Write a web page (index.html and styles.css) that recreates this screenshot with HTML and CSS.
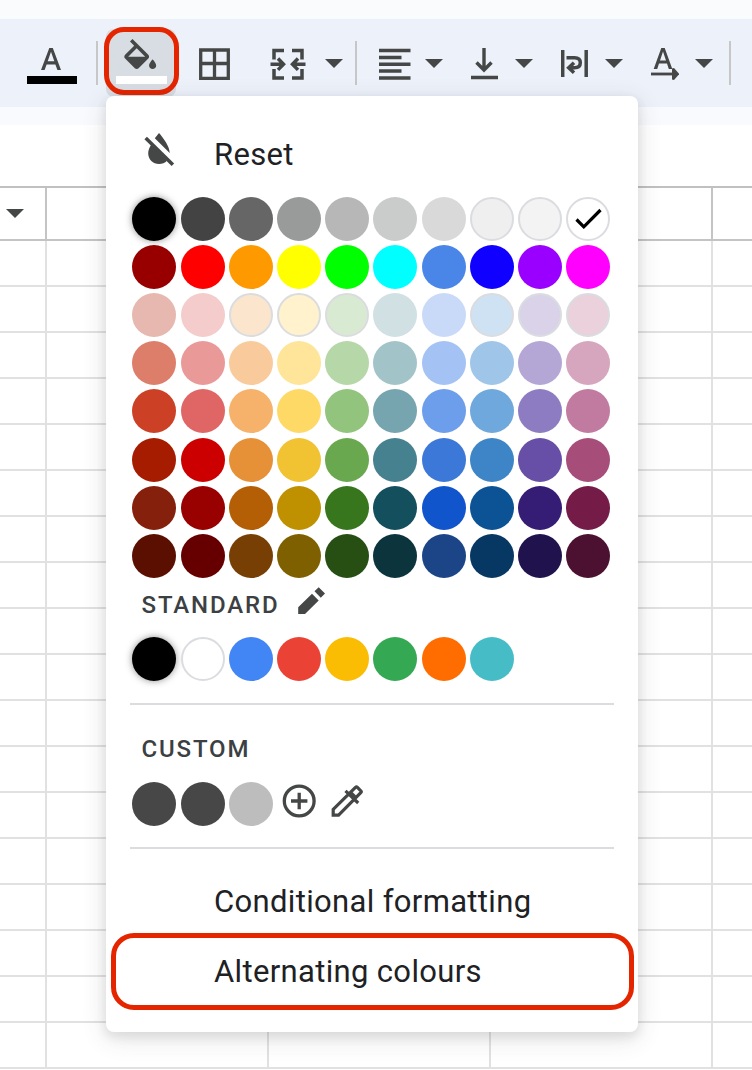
FILE: index.html
```html
<!DOCTYPE html>
<html lang="en-GB">
<head>
<meta charset="utf-8">
<title>Fill colour</title>
<link rel="stylesheet" href="styles.css">
</head>
<body>
<div class="app">
  <div class="title-strip"></div>
  <div class="toolbar">
    <div class="text-colour"><svg width="50" height="88" viewBox="27 19 50 88"><path class="ink" d="M49.3 48h3.500L61 70h-3.600l-2-5.600h-8.800L44.600 70H41zM47.700 61.300h6.600L51 51.800z"/><path d="M27 76h50v8H27z"/></svg></div>
    <div class="separator s1"></div>
    <div class="fill-button">
      <div class="pressed"></div>
      <svg width="77" height="88" viewBox="103 19 77 88"><path fill="#fff" d="M116 76h51v8h-51z"/><path class="ink" transform="translate(119 39) scale(1.77)" d="M16.56 8.940L7.620 0 6.210 1.410l2.380 2.380-5.150 5.150c-.59.59-.59 1.540 0 2.120l5.500 5.500c.29.29.68.44 1.060.44s.77-.15 1.060-.44l5.500-5.500c.59-.58.59-1.530 0-2.120zM5.210 10L10 5.210 14.790 10H5.210zM19 11.500s-2 2.170-2 3.500c0 1.100.9 2 2 2s2-.9 2-2c0-1.330-2-3.500-2-3.500z"/></svg>
      <div class="mark mark-button"></div>
    </div>
    <svg class="borders" width="31" height="88" viewBox="199 19 31 88"><path class="line" stroke-width="3.300" d="M200.700 50h27.600v28.300h-27.600zM214.500 50v28M200.700 63.500h27.600"/></svg>
    <svg class="merge" width="36" height="88" viewBox="270 19 36 88"><path class="line" stroke-width="3.500" d="M284 50.500h-10v9M284 78h-10v-9M292 50.500h10v9M292 78h10v-9M270.500 64.200h13M305.500 64.200h-13M278 58.500l5.500 5.700-5.500 5.700M298 58.500l-5.500 5.700 5.500 5.700"/></svg>
    <svg class="caret c1" width="18" height="9"><path class="ink" d="M0 0h18L9 9z"/></svg>
    <div class="separator s2"></div>
    <svg class="align" width="32" height="88" viewBox="379 19 32 88"><path class="line" stroke-width="3.500" d="M379 50.500h31.500M379 57.400h22.500M379 64.200h31.500M379 71h22.500M379 78h31.500"/></svg>
    <svg class="caret c2" width="18" height="9"><path class="ink" d="M0 0h18L9 9z"/></svg>
    <svg class="valign" width="27" height="88" viewBox="471 19 27 88"><path class="line" stroke-width="3.400" d="M471 77.500h27M484 48v22M476.500 62.500l7.500 7.500 7.500-7.500"/></svg>
    <svg class="caret c3" width="18" height="9"><path class="ink" d="M0 0h18L9 9z"/></svg>
    <svg class="wrap" width="27" height="88" viewBox="561 19 27 88"><path class="line" stroke-width="3.500" d="M562.700 50v27M586.200 50v27M566.500 57.800h8c3.800 0 5.800 2 5.800 5s-2 5-5.800 5h-5M574 62.700l-5.300 5.100 5.300 5"/></svg>
    <svg class="caret c4" width="18" height="9"><path class="ink" d="M0 0h18L9 9z"/></svg>
    <svg class="rotate" width="28" height="88" viewBox="651 19 28 88"><path class="ink" d="M661.300 48h3.400L672.300 69h-3.500l-1.800-5.400h-8L657.200 69h-3.500zM660 60.600h6l-3-9z"/><path class="line" stroke-width="2.800" d="M651 74h25"/><path class="ink" d="M672 68.500l2-.5 5.300 6-5.300 6-2-.5z"/></svg>
    <svg class="caret c5" width="18" height="9"><path class="ink" d="M0 0h18L9 9z"/></svg>
    <div class="separator s3"></div>
  </div>
  <div class="under-strip"></div>
  <div class="formula"></div>
  <div class="sheet" id="sheet"></div>

  <div class="menu">
    <div class="item reset">
      <svg width="32" height="36" viewBox="144 132 32 36"><path class="ink" d="M159 133l-4.200 5.300 14.900 14.600c0-6.400-6.100-14.600-10.700-19.900zM151.500 144.200c-2 3-3.300 6-3.300 9 0 6.200 4.800 10.800 10.800 10.800 3.100 0 6-1.100 8-3.200z"/><path class="line" stroke-width="3.600" d="M145.700 138l27.200 26.700"/></svg>
      <span>Reset</span>
    </div>
    <div class="palette" id="palette"></div>
    <div class="heading standard-heading"><span>STANDARD</span>
      <svg width="28" height="28" viewBox="299 587 28 28"><path class="ink" d="M313 593.700l6.700 6.700L306 614h-6.800v-6.800zM315.500 591.200l4.200-4 6.300 6.300-4.200 4.200z"/></svg>
    </div>
    <div class="swatches" id="standard"></div>
    <div class="rule"></div>
    <div class="heading custom-heading"><span>CUSTOM</span></div>
    <div class="swatches">
      <i class="swatch" style="background:#474747"></i><i class="swatch" style="background:#474747"></i><i class="swatch" style="background:#bdbdbd"></i>
      <svg class="tool" width="44" height="44" viewBox="277 782 44 44"><circle class="line" cx="299.200" cy="801" r="14.900" stroke-width="3.300"/><path class="line" stroke-width="3.300" d="M291 801h16.400M299.200 792.800v16.400"/></svg>
      <svg class="tool" width="44" height="44" viewBox="325 782 44 44"><path class="line" stroke-width="3.200" d="M333.200 815.200v-5.800l22.300-22c.6-.6 1.300-.6 1.900 0l3.400 3.400c.6.6.6 1.300 0 1.900L338.600 815.200zM345.500 790.800l12.700 12.200"/><path class="ink" d="M348.500 794.500l3.200-3.200 5.600 5.500-3.200 3.200z"/></svg>
    </div>
    <div class="rule lower"></div>
    <div class="item conditional"><span>Conditional formatting</span></div>
    <div class="item alternating"><span>Alternating colours</span><div class="mark mark-item"></div></div>
  </div>
</div>
<script src="script.js"></script>
</body>
</html>
```

FILE: styles.css
```css
* { box-sizing: border-box; }
body { margin: 0; background: #fff; font-family: Roboto, "Liberation Sans", sans-serif; }
svg { display: block; flex: none; }
.app { position: relative; width: 752px; height: 1070px; overflow: hidden; }
.ink { fill: #444746; }
.line { fill: none; stroke: #444746; }

.title-strip { height: 19px; background: #f9fbfd; }
.toolbar { display: flex; align-items: center; height: 88px; padding-left: 27px; background: #ecf1fa; }
.under-strip { height: 18px; background: #f9fafd; }
.separator { width: 2px; height: 44px; flex: none; background: #c7c7c7; }
.s1 { margin-left: 19px; }
.s2 { margin-left: 12px; }
.s3 { margin-left: 16px; }
.fill-button { position: relative; margin-left: 5px; }
.fill-button svg { position: relative; }
.pressed { position: absolute; left: 3px; top: 10px; width: 70px; height: 68px; border-radius: 8px; background: #d8dde4; }
.mark { position: absolute; border: 5px solid #e42500; }
.mark-button { left: 1px; top: 8px; width: 75px; height: 68px; border-radius: 20px; }
.borders { margin-left: 19px; }
.merge { margin-left: 40px; }
.c1 { margin-left: 19px; }
.align { margin-left: 22px; }
.c2 { margin-left: 14px; }
.c3 { margin-left: 17px; }
.valign { margin-left: 28px; }
.wrap { margin-left: 28px; }
.c4 { margin-left: 17px; }
.rotate { margin-left: 28px; }
.c5 { margin-left: 16px; }

.formula { height: 63px; border-bottom: 2px solid #c0c0c0; }
.sheet { display: grid; grid-template-columns: 47px 222px 222px 222px 222px; grid-template-rows: 53px; grid-auto-rows: 46px; }
.cell { border: 0 solid #e1e1e1; border-width: 0 2px 2px 0; }
.cell.head { border-color: #c4c4c4; }
.cell .caret { margin: 21px 0 0 6px; }

.menu { position: absolute; left: 106px; top: 96px; width: 532px; height: 936px; padding: 22px 24px 0; border-radius: 8px; background: #fff; box-shadow: 0 4px 8px 2px rgba(60, 64, 67, .08), 0 6px 24px rgba(60, 64, 67, .16); }
.item { position: relative; display: flex; align-items: center; height: 70px; margin: 0 -24px; padding-left: 108px; font-size: 31px; letter-spacing: .34px; color: #202124; white-space: nowrap; }
.reset { padding-left: 38px; gap: 38px; height: 72px; }
.reset svg { margin-top: -8px; }
.palette { display: grid; margin-left: 2px; padding-top: 7px; grid-template-columns: 49px 48px 48px 48px 48px 49px 48px 48px 48px 44px; grid-template-rows: 48px 48px 48px 48px 49px 48px 48px 44px; }
.swatches { display: grid; margin-left: 2px; height: 44px; grid-template-columns: 49px 48px 48px 48px 48px 49px 48px 44px; }
.swatch { display: flex; align-items: center; justify-content: center; width: 44px; height: 44px; border-radius: 50%; }
.swatch svg { margin-top: -2px; }
.outlined { border: 2px solid #dadce0; }
.black { box-shadow: 0 0 7px rgba(32, 33, 36, .5); }
.heading { display: flex; align-items: center; height: 59px; padding-left: 11.500px; font-size: 24px; font-weight: 500; letter-spacing: 1.850px; color: #3c4043; }
.standard-heading { gap: 19px; padding-bottom: 5px; }
.standard-heading svg { margin-top: -8px; }
.custom-heading { height: 77px; padding-top: 11px; }
.rule { height: 2px; margin-top: 22px; background: #dadce0; }
.rule.lower { margin-top: 21px; }
.tool { width: 44px; height: 44px; }
.conditional { margin-top: 17px; }
.mark-item { left: 5px; top: -3px; width: 523px; height: 77px; border-radius: 23px; }
```

FILE: script.js
```js
const palette = [
  ['#000000', '#434343', '#666666', '#999b9a', '#b7b7b7', '#cacccb', '#d9d9d9', '#efefef', '#f3f3f3', '#ffffff'],
  ['#980000', '#ff0000', '#ff9900', '#ffff00', '#00ff00', '#00ffff', '#4a86e8', '#0f00ff', '#9900ff', '#ff00ff'],
  ['#e6b8af', '#f4cccc', '#fce5cd', '#fff2cc', '#d9ead3', '#d0e0e3', '#c9daf8', '#cfe2f3', '#d9d2e9', '#ead1dc'],
  ['#dd7e6b', '#ea9999', '#f9cb9c', '#ffe599', '#b6d7a8', '#a2c4c9', '#a4c2f4', '#9fc5e8', '#b4a7d6', '#d5a6bd'],
  ['#cc4125', '#e06666', '#f6b26b', '#ffd966', '#93c47d', '#76a5af', '#6d9eeb', '#6fa8dc', '#8e7cc3', '#c27ba0'],
  ['#a61c00', '#cc0000', '#e69138', '#f1c232', '#6aa84f', '#45818e', '#3c78d8', '#3d85c6', '#674ea7', '#a64d79'],
  ['#85200c', '#990000', '#b45f06', '#bf9000', '#38761d', '#134f5c', '#1155cc', '#0b5394', '#351c75', '#741b47'],
  ['#5b0f00', '#660000', '#783f04', '#7f6000', '#274e13', '#0c343d', '#1c4587', '#073763', '#20124d', '#4c1130']
];
const outlined = ['#efefef', '#f3f3f3', '#ffffff', '#fce5cd', '#fff2cc', '#d9ead3', '#cfe2f3', '#d9d2e9', '#ead1dc'];
const standard = ['#000000', '#ffffff', '#4285f4', '#ea4335', '#fbbc04', '#34a853', '#ff6d01', '#46bdc6'];

function fill(id, colours, selected) {
  const box = document.getElementById(id);
  for (const colour of colours) {
    const el = document.createElement('i');
    el.className = 'swatch' + (outlined.includes(colour) ? ' outlined' : '') + (colour === '#000000' ? ' black' : '');
    el.style.background = colour;
    if (colour === selected) {
      el.innerHTML = '<svg width="28" height="22"><path d="M2.500 12.500l7.300 7.300L26.500 3" fill="none" stroke="#000" stroke-width="3.200"/></svg>';
    }
    box.append(el);
  }
}
fill('palette', palette.flat(), '#ffffff');
fill('standard', standard);

const sheet = document.getElementById('sheet');
for (let i = 0; i < 95; i++) {
  const cell = document.createElement('div');
  cell.className = i < 5 ? 'cell head' : 'cell';
  if (i === 0) cell.innerHTML = '<svg class="caret" width="18" height="9"><path class="ink" d="M0 0h18L9 9z"/></svg>';
  sheet.append(cell);
}
```
